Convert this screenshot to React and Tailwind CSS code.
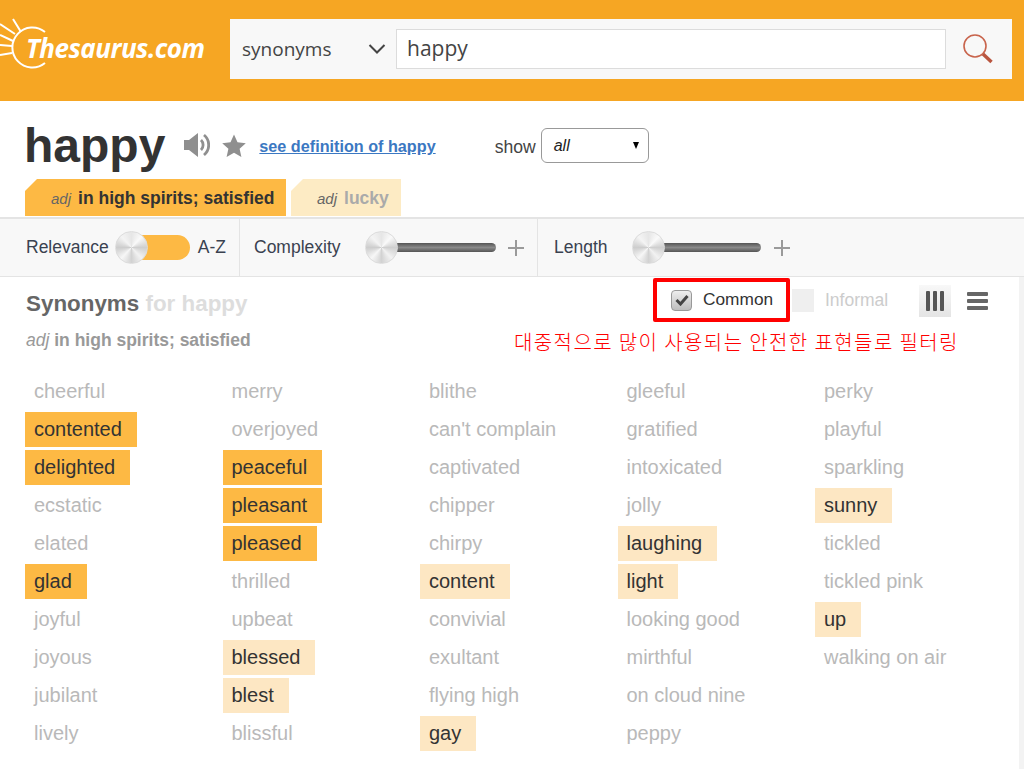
const columns = [
  [['cheerful'], ['contented', 1], ['delighted', 1], ['ecstatic'], ['elated'], ['glad', 1], ['joyful'], ['joyous'], ['jubilant'], ['lively']],
  [['merry'], ['overjoyed'], ['peaceful', 1], ['pleasant', 1], ['pleased', 1], ['thrilled'], ['upbeat'], ['blessed', 2], ['blest', 2], ['blissful']],
  [['blithe'], ["can't complain"], ['captivated'], ['chipper'], ['chirpy'], ['content', 2], ['convivial'], ['exultant'], ['flying high'], ['gay', 2]],
  [['gleeful'], ['gratified'], ['intoxicated'], ['jolly'], ['laughing', 2], ['light', 2], ['looking good'], ['mirthful'], ['on cloud nine'], ['peppy']],
  [['perky'], ['playful'], ['sparkling'], ['sunny', 2], ['tickled'], ['tickled pink'], ['up', 2], ['walking on air']]
]

function Logo() {
  return (
    <div className="relative w-[230px] h-[101px] -mt-[19px] shrink-0">
      <svg className="absolute left-0 top-0" width="50" height="80" viewBox="0 0 50 80" fill="none" stroke="#fff" strokeWidth="2">
        <path d="M45 32 A 20 20 0 1 0 45 63" />
        <path d="M13 19 L21 32 M0 24 L15 34 M0 35 L13 41 M0 45 L12 46 M0 55 L12 53" />
      </svg>
      <span className="absolute left-[26px] top-[29px] font-['Open_Sans',sans-serif] italic font-bold text-[26px] leading-[38px] text-white tracking-[-0.5px]">Thesaurus.com</span>
    </div>
  )
}

function Knob() {
  return (
    <div className="relative z-10 w-[33px] h-[33px] rounded-full border border-[#dcdcdc] shrink-0 bg-[conic-gradient(#e6e6e6,#fafafa_12%,#cfcfcf_25%,#f2f2f2_38%,#d2d2d2_50%,#f7f7f7_62%,#cdcdcd_75%,#f4f4f4_88%,#e6e6e6)]" />
  )
}

function Track({ width }) {
  return (
    <div className={`flex items-center ${width}`}>
      <Knob />
      <div className="-ml-[2px] flex-1 h-[9px] rounded-r-full bg-gradient-to-b from-[#555] via-[#8a8a8a] to-[#555]" />
    </div>
  )
}

function Plus() {
  return (
    <svg width="16" height="16" viewBox="0 0 16 16" className="shrink-0">
      <path d="M8 0v16M0 8h16" stroke="#9a9a9a" strokeWidth="2" />
    </svg>
  )
}

function Word({ text, level }) {
  const shade = level === 1 ? 'bg-[#fdb944] text-[#333]' : level === 2 ? 'bg-[#fde7c3] text-[#333]' : 'text-[#b9b9b9]'
  return (
    <div className="h-[38px] flex items-start">
      <span className={`inline-block h-[35px] pl-[9px] pr-[15px] leading-[34px] text-[20px] ${shade}`}>{text}</span>
    </div>
  )
}

export default function App() {
  return (
    <div className="w-[1024px] h-[769px] overflow-hidden bg-[#f3f3f3] font-['Liberation_Sans',sans-serif] text-[#333]">
      <header className="h-[101px] bg-[#f6a623] flex items-start pt-[19px]">
        <Logo />
        <div className="w-[782px] h-[60px] bg-[#f8f8f8] flex items-center">
          <div className="w-[166px] pl-[12px] pr-[10px] flex items-center justify-between font-['Open_Sans',sans-serif] text-[19px] text-[#444]">
            <span>synonyms</span>
            <svg width="18" height="10" viewBox="0 0 18 10" fill="none"><path d="M1.5 1 L9 8.5 L16.5 1" stroke="#444" strokeWidth="2" /></svg>
          </div>
          <div className="w-[550px] h-[40px] bg-white border border-[#dcdcdc] pl-[10px] leading-[37px] font-['Open_Sans',sans-serif] text-[21px] text-[#444]">happy</div>
          <svg className="ml-[16px]" width="32" height="32" viewBox="0 0 32 32" fill="none">
            <circle cx="13" cy="13" r="11" stroke="#c8644c" strokeWidth="1.6" />
            <path d="M21 21 L29.5 29" stroke="#b9553f" strokeWidth="3.4" />
          </svg>
        </div>
      </header>

      <section className="h-[116px] pl-[24px] bg-white">
        <div className="h-[78px] flex items-start">
          <h1 className="mt-[15px] text-[48px] leading-[60px] font-bold text-[#333]">happy</h1>
          <svg className="ml-[19px] mt-[32px]" width="26" height="24" viewBox="0 0 26 24" fill="none">
            <path d="M0 7h5l9-7v24l-9-7H0z" fill="#8f8f8f" />
            <path d="M17 7a7 7 0 0 1 0 10" stroke="#8f8f8f" strokeWidth="2.8" />
            <path d="M20 2a13 13 0 0 1 0 20" stroke="#8f8f8f" strokeWidth="2.8" />
          </svg>
          <svg className="ml-[12px] mt-[33px]" width="24" height="24" viewBox="0 0 24 24">
            <path d="M12 0.5l3.5 7.8 8.3.9-6.2 5.6 1.8 8.2L12 18.8l-7.4 4.2 1.8-8.2L.2 9.2l8.3-.9z" fill="#8f8f8f" />
          </svg>
          <a className="ml-[13px] mt-[35px] text-[16.2px] leading-[20px] font-bold text-[#3b78c2] underline">see definition of happy</a>
          <span className="ml-[59px] mt-[35px] text-[17.6px] leading-[22px] text-[#444]">show</span>
          <div className="ml-[5px] mt-[27px] w-[108px] h-[35px] rounded-[6px] border border-[#999] flex items-center justify-between pl-[12px] pr-[9px]">
            <span className="italic text-[16px] text-[#222]">all</span>
            <span className="w-0 h-0 border-x-[3.5px] border-x-transparent border-t-[7px] border-t-black" />
          </div>
        </div>
        <div className="flex gap-[5px] ml-[1px]">
          <div className="w-[261px] h-[37px] bg-[#fdb944] [clip-path:polygon(12px_0,100%_0,100%_100%,0_100%,0_12px)] flex items-center pl-[26px]">
            <span className="italic text-[15px] text-[#666] mr-[7px] pt-[4px]">adj</span>
            <span className="font-bold text-[17.5px] text-[#333] pt-[2px]">in high spirits; satisfied</span>
          </div>
          <div className="w-[110px] h-[37px] bg-[#fdebc4] [clip-path:polygon(12px_0,100%_0,100%_100%,0_100%,0_12px)] flex items-center pl-[26px]">
            <span className="italic text-[15px] text-[#666] mr-[7px] pt-[4px]">adj</span>
            <span className="font-bold text-[17.5px] text-[#aaa] pt-[2px]">lucky</span>
          </div>
        </div>
      </section>

      <div className="h-[60px] bg-[#f8f8f8] border-t-2 border-b border-[#e4e4e4] flex items-center text-[17.5px] text-[#3a4250]">
        <div className="w-[240px] h-full pl-[26px] flex items-center border-r border-[#e4e4e4]">
          <span>Relevance</span>
          <div className="ml-[6px] flex items-center w-[75px]">
            <Knob />
            <div className="-ml-[16px] flex-1 h-[25px] rounded-r-full bg-[#fdb944]" />
          </div>
          <span className="ml-[8px]">A-Z</span>
        </div>
        <div className="w-[298px] h-full pl-[14px] flex items-center border-r border-[#e4e4e4]">
          <span className="w-[111px]">Complexity</span>
          <Track width="w-[131px]" />
          <div className="ml-[12px]"><Plus /></div>
        </div>
        <div className="flex-1 h-full pl-[16px] flex items-center">
          <span className="w-[78px]">Length</span>
          <Track width="w-[129px]" />
          <div className="ml-[13px]"><Plus /></div>
        </div>
      </div>

      <main className="w-[1019px] h-[492px] pl-[25px] bg-white">
        <div className="h-[97px] relative">
          <h2 className="absolute left-[1px] top-[14px] font-bold text-[22.4px] leading-[26px] text-[#666] whitespace-nowrap">
            Synonyms <span className="text-[#ddd]">for happy</span>
          </h2>
          <p className="absolute left-[1px] top-[52px] text-[17.5px] leading-[22px] font-bold text-[#999] whitespace-nowrap">
            <span className="italic font-normal">adj</span> in high spirits; satisfied
          </p>
          <div className="absolute left-[628px] top-[1px] w-[137px] h-[44px] border-[4px] border-[#f00] rounded-[2px] flex items-center pl-[14px]">
            <div className="w-[21px] h-[21px] rounded-[4px] border border-[#999] bg-gradient-to-b from-[#eee] to-[#bdbdbd] flex items-center justify-center">
              <svg width="14" height="12" viewBox="0 0 14 12" fill="none"><path d="M1.5 6 L5.5 10 L12.5 2" stroke="#444" strokeWidth="3" /></svg>
            </div>
            <span className="ml-[11px] text-[17.3px] text-[#333]">Common</span>
          </div>
          <div className="absolute left-[767px] top-[12px] w-[22px] h-[23px] bg-[#efefef]" />
          <span className="absolute left-[800px] top-[11px] text-[17.5px] leading-[24px] text-[#ccc]">Informal</span>
          <div className="absolute left-[894px] top-[8px] w-[32px] h-[32px] bg-gradient-to-b from-[#f8f8f8] to-[#e4e4e4] flex items-center justify-center gap-[3px]">
            <div className="w-[4px] h-[20px] rounded-[1px] bg-[#555]" />
            <div className="w-[4px] h-[20px] rounded-[1px] bg-[#555]" />
            <div className="w-[4px] h-[20px] rounded-[1px] bg-[#555]" />
          </div>
          <div className="absolute left-[942px] top-[15px] w-[21px] flex flex-col gap-[3px]">
            <div className="h-[4px] rounded-[1px] bg-[#666]" />
            <div className="h-[4px] rounded-[1px] bg-[#666]" />
            <div className="h-[4px] rounded-[1px] bg-[#666]" />
          </div>
          <p className="absolute left-[489px] top-[51px] text-[20px] tracking-[1.4px] leading-[28px] text-[#f00] whitespace-nowrap font-['Noto_Sans_CJK_KR',sans-serif] font-light">대중적으로 많이 사용되는 안전한 표현들로 필터링</p>
        </div>
        <div className="flex">
          {columns.map((col, i) => (
            <div key={i} className="w-[197.5px]">
              {col.map(([text, level]) => <Word key={text} text={text} level={level} />)}
            </div>
          ))}
        </div>
      </main>
    </div>
  )
}
